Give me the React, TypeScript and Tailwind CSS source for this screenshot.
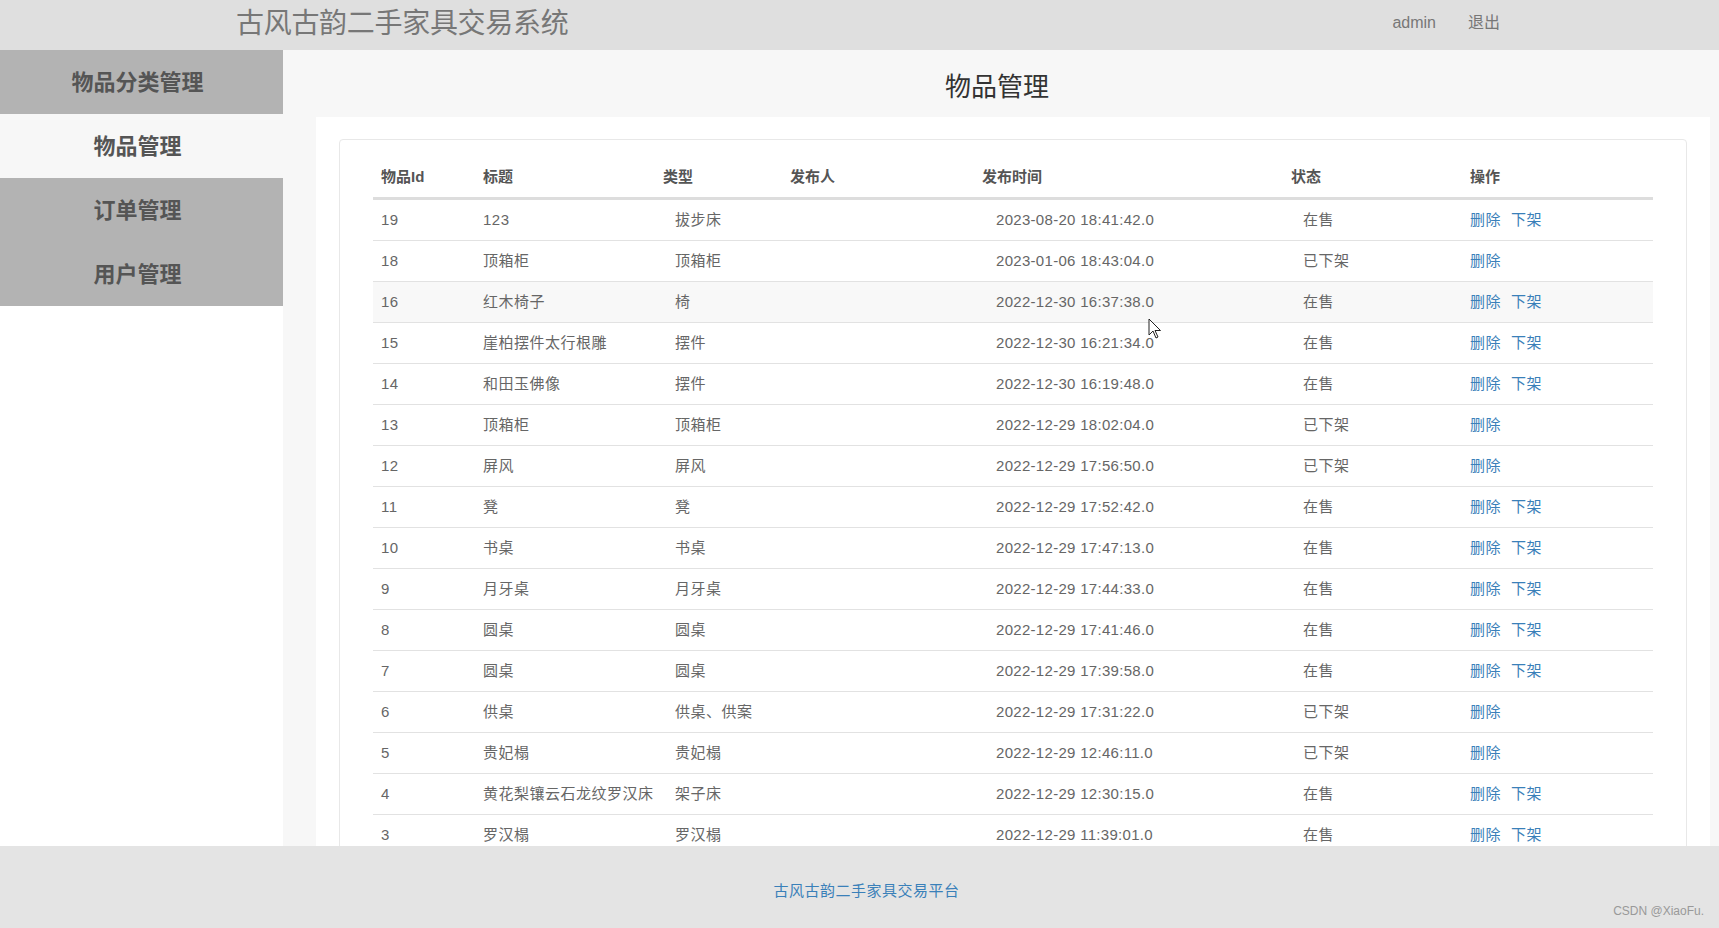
import React from 'react';

const FONT = '"Liberation Sans", "Noto Sans CJK SC", sans-serif';

type Item = { id: number; title: string; type: string; time: string; status: string };

const ITEMS: Item[] = [
  { id: 19, title: '123', type: '拔步床', time: '2023-08-20 18:41:42.0', status: '在售' },
  { id: 18, title: '顶箱柜', type: '顶箱柜', time: '2023-01-06 18:43:04.0', status: '已下架' },
  { id: 16, title: '红木椅子', type: '椅', time: '2022-12-30 16:37:38.0', status: '在售' },
  { id: 15, title: '崖柏摆件太行根雕', type: '摆件', time: '2022-12-30 16:21:34.0', status: '在售' },
  { id: 14, title: '和田玉佛像', type: '摆件', time: '2022-12-30 16:19:48.0', status: '在售' },
  { id: 13, title: '顶箱柜', type: '顶箱柜', time: '2022-12-29 18:02:04.0', status: '已下架' },
  { id: 12, title: '屏风', type: '屏风', time: '2022-12-29 17:56:50.0', status: '已下架' },
  { id: 11, title: '凳', type: '凳', time: '2022-12-29 17:52:42.0', status: '在售' },
  { id: 10, title: '书桌', type: '书桌', time: '2022-12-29 17:47:13.0', status: '在售' },
  { id: 9, title: '月牙桌', type: '月牙桌', time: '2022-12-29 17:44:33.0', status: '在售' },
  { id: 8, title: '圆桌', type: '圆桌', time: '2022-12-29 17:41:46.0', status: '在售' },
  { id: 7, title: '圆桌', type: '圆桌', time: '2022-12-29 17:39:58.0', status: '在售' },
  { id: 6, title: '供桌', type: '供桌、供案', time: '2022-12-29 17:31:22.0', status: '已下架' },
  { id: 5, title: '贵妃榻', type: '贵妃榻', time: '2022-12-29 12:46:11.0', status: '已下架' },
  { id: 4, title: '黄花梨镶云石龙纹罗汉床', type: '架子床', time: '2022-12-29 12:30:15.0', status: '在售' },
  { id: 3, title: '罗汉榻', type: '罗汉榻', time: '2022-12-29 11:39:01.0', status: '在售' },
];

const MENU = ['物品分类管理', '物品管理', '订单管理', '用户管理'];

export default function App() {
  return (
    <div className="h-screen w-full flex flex-col overflow-hidden bg-white relative" style={{ fontFamily: FONT }}>
      {/* top bar */}
      <header className="h-[50px] shrink-0 bg-[#dfdfdf] flex items-center">
        <h1 className="pl-[236px] pb-[3px] text-[28px] text-[#777] tracking-[-0.3px] leading-none">古风古韵二手家具交易系统</h1>
        <div className="ml-auto mr-[219px] pb-[4px] flex items-center gap-[32px] text-[16px] text-[#777]">
          <span>admin</span>
          <span>退出</span>
        </div>
      </header>

      <div className="flex-1 flex min-h-0">
        {/* sidebar */}
        <aside className="w-[283px] shrink-0 bg-white">
          {MENU.map((m, i) => (
            <div key={m}
              className={`h-[64px] flex items-center justify-center pr-[8px] text-[22px] font-bold text-[#555] ${i === 1 ? 'bg-[#f7f7f7]' : 'bg-[#b3b3b3]'}`}>
              {m}
            </div>
          ))}
        </aside>

        {/* main */}
        <main className="flex-1 min-w-0 bg-[#f7f7f7] flex flex-col overflow-hidden">
          <div className="h-[67px] shrink-0 flex items-center justify-center pt-[7px] pr-[8px] text-[26px] text-[#333]">物品管理</div>
          <div className="flex-1 bg-white ml-[33px] mr-[9px] pt-[22px] px-[23px]">
            <div className="border border-[#e8e8e8] rounded-[4px] px-[33px] pt-[17px] h-[900px]">
              <table className="w-full table-fixed border-separate border-spacing-0 text-[15px] tracking-[0.5px]">
                <colgroup>
                  <col className="w-[102px]" />
                  <col className="w-[180px]" />
                  <col className="w-[127px]" />
                  <col className="w-[192px]" />
                  <col className="w-[309px]" />
                  <col className="w-[179px]" />
                  <col className="w-[191px]" />
                </colgroup>
                <thead>
                  <tr className="text-left text-[#555] font-bold">
                    {['物品Id', '标题', '类型', '发布人', '发布时间', '状态', '操作'].map(h => (
                      <th key={h} className="h-[43px] px-2 border-b-[3px] border-[#dddddd] whitespace-nowrap tracking-normal">{h}</th>
                    ))}
                  </tr>
                </thead>
                <tbody className="text-[#666]">
                  {ITEMS.map(it => (
                    <tr key={it.id} className={it.id === 16 ? 'bg-[#f8f8f8]' : ''}>
                      <td className="h-[41px] px-2 border-b border-[#e2e2e2] whitespace-nowrap">{it.id}</td>
                      <td className="h-[41px] pl-2 border-b border-[#e2e2e2] whitespace-nowrap overflow-visible">{it.title}</td>
                      <td className="h-[41px] pl-5 border-b border-[#e2e2e2] whitespace-nowrap">{it.type}</td>
                      <td className="h-[41px] px-2 border-b border-[#e2e2e2]"></td>
                      <td className="h-[41px] pl-[22px] border-b border-[#e2e2e2] whitespace-nowrap tracking-[0.3px]">{it.time}</td>
                      <td className="h-[41px] pl-5 border-b border-[#e2e2e2] whitespace-nowrap">{it.status}</td>
                      <td className="h-[41px] px-2 border-b border-[#e2e2e2] whitespace-nowrap text-[#3a80b9]">
                        <span>删除</span>
                        {it.status === '在售' && <span className="ml-[10px]">下架</span>}
                      </td>
                    </tr>
                  ))}
                </tbody>
              </table>
            </div>
          </div>
        </main>
      </div>

      {/* footer */}
      <footer className="h-[82px] shrink-0 bg-[#e4e4e4] flex items-center justify-center pt-[8px] relative">
        <span className="text-[15px] tracking-[0.5px] text-[#3a80b9] ml-[14px]">古风古韵二手家具交易平台</span>
        <span className="absolute right-[15px] bottom-[8px] text-[12px] text-[#999]">CSDN @XiaoFu.</span>
      </footer>

      {/* mouse pointer */}
      <svg className="absolute left-[1148px] top-[318px] pointer-events-none" width="14" height="22" viewBox="0 0 14 22">
        <path d="M1 1 L1 17 L5 13 L8 20 L10 19 L7 12.5 L12.5 12.5 Z" fill="#fff" stroke="#222" strokeWidth="1" strokeLinejoin="round" />
      </svg>
    </div>
  );
}
